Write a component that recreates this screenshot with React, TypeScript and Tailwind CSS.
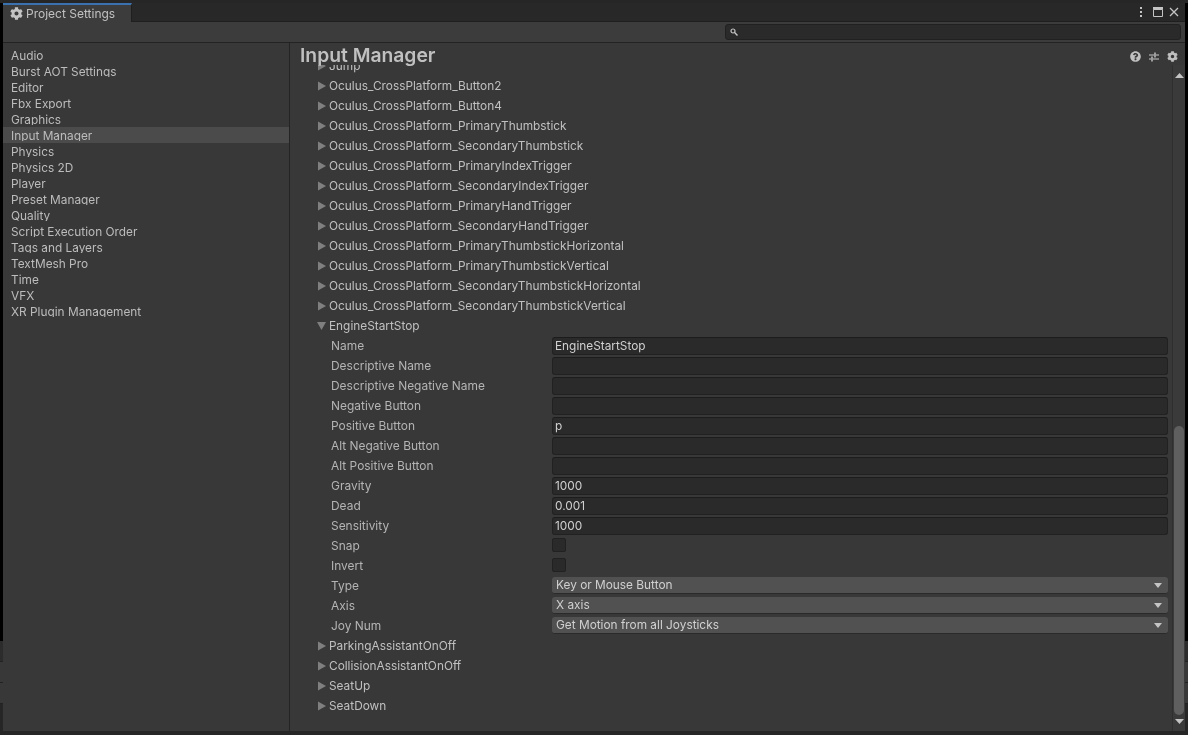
import { FaCog, FaQuestionCircle } from 'react-icons/fa';

const menu = [
    'Audio', 'Burst AOT Settings', 'Editor', 'Fbx Export', 'Graphics', 'Input Manager', 'Physics', 'Physics 2D',
    'Player', 'Preset Manager', 'Quality', 'Script Execution Order', 'Tags and Layers', 'TextMesh Pro', 'Time',
    'VFX', 'XR Plugin Management',
];

const axesBefore = [
    'Jump',
    'Oculus_CrossPlatform_Button2',
    'Oculus_CrossPlatform_Button4',
    'Oculus_CrossPlatform_PrimaryThumbstick',
    'Oculus_CrossPlatform_SecondaryThumbstick',
    'Oculus_CrossPlatform_PrimaryIndexTrigger',
    'Oculus_CrossPlatform_SecondaryIndexTrigger',
    'Oculus_CrossPlatform_PrimaryHandTrigger',
    'Oculus_CrossPlatform_SecondaryHandTrigger',
    'Oculus_CrossPlatform_PrimaryThumbstickHorizontal',
    'Oculus_CrossPlatform_PrimaryThumbstickVertical',
    'Oculus_CrossPlatform_SecondaryThumbstickHorizontal',
    'Oculus_CrossPlatform_SecondaryThumbstickVertical',
];

const axesAfter = ['ParkingAssistantOnOff', 'CollisionAssistantOnOff', 'SeatUp', 'SeatDown'];

const textFields = [
    ['Name', 'EngineStartStop'],
    ['Descriptive Name', ''],
    ['Descriptive Negative Name', ''],
    ['Negative Button', ''],
    ['Positive Button', 'p'],
    ['Alt Negative Button', ''],
    ['Alt Positive Button', ''],
    ['Gravity', '1000'],
    ['Dead', '0.001'],
    ['Sensitivity', '1000'],
];

const selects = [
    ['Type', 'Key or Mouse Button'],
    ['Axis', 'X axis'],
    ['Joy Num', 'Get Motion from all Joysticks'],
];

function Foldout({ name, open }: { name: string; open?: boolean }) {
    return (
        <div className="h-5 flex items-center pl-[27px]">
            <svg width="9" height="10" viewBox="0 0 9 10" className="shrink-0 mr-[3px]">
                {open ? <path d="M0 1h9L4.5 9z" fill="#7f7f7f" /> : <path d="M1 0.5v9L9 5z" fill="#7f7f7f" />}
            </svg>
            <span className="text-[#c0c0c0] text-[11.85px]">{name}</span>
        </div>
    );
}

function Row({ label, children }: { label: string; children: React.ReactNode }) {
    return (
        <div className="h-5 flex items-center pl-[41px] pr-[4px]">
            <span className="w-[221px] shrink-0 text-[#b4b4b4] text-[11.95px]">{label}</span>
            {children}
        </div>
    );
}

function Strip() {
    return (
        <div className="w-[3px] flex flex-col shrink-0 bg-[#262626]">
            <div className="h-[3px]" />
            <div className="h-[638px] bg-black" />
            <div className="h-[20px] bg-[#2c2c2c]" />
            <div className="h-[21px] bg-[#383838] border-t border-[#222222]" />
            <div className="h-[21px] bg-[#383838] border-t border-[#222222]" />
            <div className="flex-1 border-t border-[#222222]" />
        </div>
    );
}

export default function App() {
    return (
        <div
            className="w-[1188px] h-[735px] flex overflow-hidden bg-[#262626] text-[11.85px] leading-4 blur-[0.3px]"
            style={{ fontFamily: 'Inter, "Noto Sans", sans-serif' }}
        >
            <Strip />
            <div className="flex-1 min-w-0 flex flex-col mt-[3px] mb-[4px]">
                {/* tab strip */}
                <div className="h-[19px] flex bg-[#282828] border-b border-[#1f1f1f] shrink-0">
                    <div className="w-[129px] h-[19px] bg-[#3c3c3c] border-t-2 border-[#3a72b0] border-r border-r-[#1f1f1f] flex items-center pl-[7px] gap-[3px]">
                        <FaCog size={13} className="text-[#c4c4c4]" />
                        <span className="text-[#c0c0c0] text-[12px]">Project Settings</span>
                    </div>
                    <div className="ml-auto flex items-center pr-[6px]">
                        <svg width="4" height="12" viewBox="0 0 4 12">
                            <rect x="1" y="1" width="2" height="2" fill="#c4c4c4" />
                            <rect x="1" y="5" width="2" height="2" fill="#c4c4c4" />
                            <rect x="1" y="9" width="2" height="2" fill="#c4c4c4" />
                        </svg>
                        <svg width="10" height="10" viewBox="0 0 10 10" className="ml-[10px]">
                            <path d="M0.5 2.5h9v7h-9z" fill="none" stroke="#c4c4c4" />
                            <rect width="10" height="2.5" fill="#c4c4c4" />
                        </svg>
                        <svg width="10" height="10" viewBox="0 0 10 10" className="ml-[6px]">
                            <path d="M1 1l8 8M9 1l-8 8" stroke="#c4c4c4" strokeWidth="1.3" />
                        </svg>
                    </div>
                </div>

                {/* search toolbar */}
                <div className="h-[21px] shrink-0 bg-[#3c3c3c] border-b border-[#232323] flex items-center justify-end pr-[4px]">
                    <div className="w-[456px] h-[16px] bg-[#2a2a2a] border border-[#212121] rounded-[3px] flex items-center pl-[4px]">
                        <svg width="8" height="8" viewBox="0 0 8 8">
                            <circle cx="3" cy="3" r="2" fill="none" stroke="#c4c4c4" strokeWidth="1.2" />
                            <path d="M4.6 4.6L7.5 7.5" stroke="#c4c4c4" strokeWidth="1.4" />
                        </svg>
                    </div>
                </div>

                <div className="flex-1 min-h-0 flex bg-[#383838]">
                    {/* settings list */}
                    <div className="w-[286px] shrink-0 pt-[4px]">
                        {menu.map(item => (
                            <div
                                key={item}
                                className={`h-4 pl-[8px] text-[#bcbcbc] ${item === 'Input Manager' ? 'bg-[#4b4b4b]' : ''}`}
                            >
                                <div className="h-[14px] leading-[18px] overflow-hidden">{item}</div>
                            </div>
                        ))}
                    </div>
                    <div className="w-px shrink-0 bg-[#242424]" />

                    {/* inspector */}
                    <div className="flex-1 min-w-0 flex flex-col">
                        <div className="h-[22px] shrink-0 flex items-start pl-[10px] pr-[7px] relative">
                            <span className="text-[19.3px] leading-6 font-semibold text-[#c0c0c0]">Input Manager</span>
                            <div className="ml-auto flex items-center gap-[8px] mt-[8px]">
                                <FaQuestionCircle size={11} className="text-[#c0c0c0]" />
                                <svg width="10" height="10" viewBox="0 0 10 10">
                                    <path d="M0 3h5M7 3h3M0 7h2M4 7h6" stroke="#c8c8c8" strokeWidth="1.2" />
                                    <path d="M6 0.5v5M3 4.5v5" stroke="#c8c8c8" strokeWidth="1.4" />
                                </svg>
                                <FaCog size={11} className="text-[#c0c0c0]" />
                            </div>
                        </div>
                        <div className="flex-1 min-h-0 flex">
                            <div className="flex-1 min-w-0 overflow-hidden">
                                <div className="-mt-[9px]">
                                    {axesBefore.map(a => <Foldout key={a} name={a} />)}
                                    <Foldout name="EngineStartStop" open />
                                    {textFields.map(([label, value]) => (
                                        <Row key={label} label={label}>
                                            <div className="flex-1 h-[18px] bg-[#2a2a2a] border border-[#212121] border-t-[#1c1c1c] rounded-[3px] pl-[2px] leading-4 text-[#d0d0d0]">
                                                {value}
                                            </div>
                                        </Row>
                                    ))}
                                    {['Snap', 'Invert'].map(label => (
                                        <Row key={label} label={label}>
                                            <div className="w-[14px] h-[14px] -mt-[2px] bg-[#2a2a2a] border border-[#212121] rounded-[2px]" />
                                        </Row>
                                    ))}
                                    {selects.map(([label, value]) => (
                                        <Row key={label} label={label}>
                                            <div className="flex-1 h-[17px] -mt-[1px] bg-[#515151] border-b border-[#2a2a2a] rounded-[3px] pl-[4px] pr-[6px] flex items-center justify-between text-[#d0d0d0]">
                                                <span>{value}</span>
                                                <svg width="8" height="5" viewBox="0 0 8 5">
                                                    <path d="M0 0h8L4 5z" fill="#c4c4c4" />
                                                </svg>
                                            </div>
                                        </Row>
                                    ))}
                                    {axesAfter.map(a => <Foldout key={a} name={a} />)}
                                </div>
                            </div>

                            {/* scrollbar */}
                            <div className="w-[13px] shrink-0 border-l border-[#2f2f2f] flex flex-col items-center bg-[#3a3a3a] pt-[8px]">
                                <svg width="9" height="5" viewBox="0 0 9 5" className="shrink-0">
                                    <path d="M0 5h9L4.5 0z" fill="#c4c4c4" />
                                </svg>
                                <div className="w-[10px] h-[289px] mt-[348px] rounded-full bg-[#5f5f5f] shrink-0" />
                                <svg width="9" height="5" viewBox="0 0 9 5" className="shrink-0 mt-[4px]">
                                    <path d="M0 0h9L4.5 5z" fill="#c4c4c4" />
                                </svg>
                            </div>
                        </div>
                    </div>
                </div>
            </div>
            <Strip />
        </div>
    );
}
